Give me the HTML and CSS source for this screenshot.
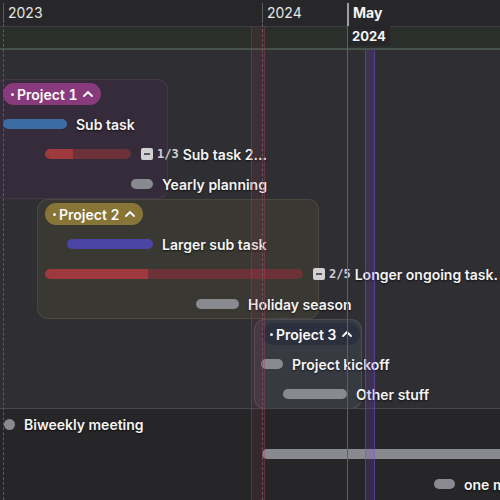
FILE: index.html
```html
<!DOCTYPE html>
<html>
<head>
<meta charset="utf-8">
<link rel="stylesheet" href="styles.css">
</head>
<body>
<div class="chart">
  <div class="axis">
    <div class="tick" style="left:3px">2023</div>
    <div class="tick" style="left:262px">2024</div>
    <div class="tick major" style="left:347px">May</div>
  </div>
  <div class="subaxis">
    <div class="sublabel" style="left:348px">2024</div>
  </div>

  <div class="body">
    <div class="group g1" style="margin-left:-5px;width:173px">
      <div class="row"><div class="pill p1" style="margin-left:8px"><span class="dot"></span>Project 1<svg class="chev" viewBox="0 0 10 6" width="10" height="6"><path d="M1 5 L5 1 L9 5" fill="none" stroke="#fff" stroke-width="1.8" stroke-linecap="round" stroke-linejoin="round"/></svg></div></div>
      <div class="row"><div class="bar blue" style="margin-left:8px;width:64px"></div><span class="label">Sub task</span></div>
      <div class="row"><div class="bar red" style="margin-left:50px;width:86px"><div class="prog" style="width:28px"></div></div><span class="minus"></span><span class="count">1/3</span><span class="label tight">Sub task 2...</span></div>
      <div class="row"><div class="bar gray" style="margin-left:136px;width:22px"></div><span class="label">Yearly planning</span></div>
    </div>

    <div class="group g2" style="margin-left:37px;width:282px">
      <div class="row"><div class="pill p2" style="margin-left:8px"><span class="dot"></span>Project 2<svg class="chev" viewBox="0 0 10 6" width="10" height="6"><path d="M1 5 L5 1 L9 5" fill="none" stroke="#fff" stroke-width="1.8" stroke-linecap="round" stroke-linejoin="round"/></svg></div></div>
      <div class="row"><div class="bar indigo" style="margin-left:30px;width:86px"></div><span class="label">Larger sub task</span></div>
      <div class="row"><div class="bar red" style="margin-left:8px;width:258px"><div class="prog" style="width:103px"></div></div><span class="minus"></span><span class="count">2/5</span><span class="label tight">Longer ongoing task.</span></div>
      <div class="row"><div class="bar gray" style="margin-left:159px;width:43px"></div><span class="label">Holiday season</span></div>
    </div>

    <div class="group g3" style="margin-left:254px;width:108px">
      <div class="row"><div class="pill p3" style="margin-left:8px"><span class="dot"></span>Project 3<svg class="chev" viewBox="0 0 10 6" width="10" height="6"><path d="M1 5 L5 1 L9 5" fill="none" stroke="#fff" stroke-width="1.8" stroke-linecap="round" stroke-linejoin="round"/></svg></div></div>
      <div class="row"><div class="bar gray" style="margin-left:7px;width:22px"></div><span class="label">Project kickoff</span></div>
      <div class="row"><div class="bar gray" style="margin-left:29px;width:64px"></div><span class="label">Other stuff</span></div>
    </div>
  </div>

  <div class="lower">
    <div class="row"><div class="milestone" style="margin-left:4px"></div><span class="label">Biweekly meeting</span></div>
    <div class="row"><div class="bar gray" style="margin-left:262px;width:300px"></div></div>
    <div class="row"><div class="bar gray" style="margin-left:434px;width:21px"></div><span class="label">one meeting</span></div>
  </div>

  <div class="vline dashed" style="left:3px;top:24px"></div>
  <div class="band today" style="left:251px"></div>
  <div class="vline dashed" style="left:262px;top:24px"></div>
  <div class="vline solid" style="left:347px"></div>
  <div class="band purple" style="left:365px"></div>
</div>
</body>
</html>
```

FILE: styles.css
```css
html, body {
  margin: 0;
  padding: 0;
  background: #262628;
}
.chart {
  position: relative;
  width: 500px;
  height: 500px;
  overflow: hidden;
  font-family: Inter, "Noto Sans", sans-serif;
  color: #f2f2f2;
  background: #262628;
}
.axis {
  position: relative;
  height: 26px;
  background: #272729;
  border-bottom: 1px solid #3e3d44;
}
.tick {
  position: absolute;
  top: 3px;
  height: 20px;
  line-height: 20px;
  padding-left: 4px;
  border-left: 1px solid #5c5c60;
  font-size: 14px;
  color: #e6e6e6;
}
.tick.major {
  font-weight: 700;
  color: #f4f4f4;
  border-left: 2px solid #a0a0a4;
  height: 23px;
}
.subaxis {
  position: relative;
  height: 21px;
  background: #2a2f2c;
  border-bottom: 2px solid #47524c;
}
.sublabel {
  position: absolute;
  top: -1px;
  height: 20px;
  line-height: 20px;
  padding: 0 4px;
  background: #262628;
  font-size: 13px;
  font-weight: 700;
  color: #f4f4f4;
}
.body {
  background: #2f2f33;
  padding-top: 29px;
}
.group {
  border-radius: 11px;
}
.g1 {
  background: #352b3a;
  box-shadow: inset 0 0 0 1px #453748;
}
.g2 {
  background: #393833;
  box-shadow: inset 0 0 0 1px #4a473f;
}
.g3 {
  background: #383a42;
  box-shadow: inset 0 0 0 1px #4b4d56;
}
.row {
  height: 30px;
  display: flex;
  align-items: center;
  white-space: nowrap;
}
.pill {
  height: 22px;
  border-radius: 11px;
  display: flex;
  align-items: center;
  padding: 0 8px;
  font-size: 14px;
  font-weight: 600;
  color: #fafafa;
  flex: none;
  font-variant-numeric: tabular-nums;
}
.p1 { background: #883a7c; }
.p2 { background: #877437; }
.p3 { background: #2b303c; }
.dot {
  width: 3px;
  height: 3px;
  border-radius: 50%;
  background: #f4f4f4;
  margin-right: 3px;
}
.chev {
  margin-left: 5px;
}
.bar {
  height: 10px;
  border-radius: 5px;
  flex: none;
  position: relative;
  overflow: hidden;
}
.blue { background: #3b6ca4; }
.indigo { background: #4b45a5; }
.gray { background: #898a90; }
.red { background: #6c3237; }
.prog {
  height: 100%;
  background: #9e3a3d;
  border-radius: 5px 0 0 5px;
}
.milestone {
  width: 11px;
  height: 11px;
  border-radius: 50%;
  background: #898a90;
  flex: none;
}
.label {
  margin-left: 9px;
  font-size: 14px;
  font-weight: 600;
  color: #f4f4f4;
  text-shadow: 0 1px 2px rgba(0, 0, 0, 0.7);
}
.label.tight {
  margin-left: 4px;
}
.minus {
  margin-left: 10px;
  width: 12px;
  height: 12px;
  border-radius: 2px;
  background: #d2d2d4;
  position: relative;
  flex: none;
}
.minus::after {
  content: "";
  position: absolute;
  left: 3px;
  top: 5px;
  width: 6px;
  height: 2px;
  background: #58585c;
}
.count {
  margin-left: 4px;
  font-family: "DejaVu Sans Mono", monospace;
  font-size: 12px;
  font-weight: 700;
  color: #cfcfd2;
}
.lower {
  margin-top: -1px;
  border-top: 1px solid #47474c;
}
.vline {
  position: absolute;
  bottom: 0;
  width: 0;
}
.vline.dashed {
  border-left: 1px dashed #5b5b60;
}
.vline.solid {
  top: 26px;
  border-left: 1px solid #5e5e63;
}
.band {
  position: absolute;
  top: 27px;
  bottom: 0;
  box-sizing: border-box;
}
.band.today {
  width: 14px;
  background: rgba(170, 50, 80, 0.12);
  border-left: 1px solid rgba(190, 60, 95, 0.35);
  border-right: 1px solid rgba(190, 60, 95, 0.35);
}
.band.purple {
  top: 50px;
  width: 10px;
  background: rgba(110, 70, 200, 0.2);
  border-left: 1px solid rgba(130, 80, 220, 0.45);
  border-right: 1px solid rgba(130, 80, 220, 0.45);
}
```
